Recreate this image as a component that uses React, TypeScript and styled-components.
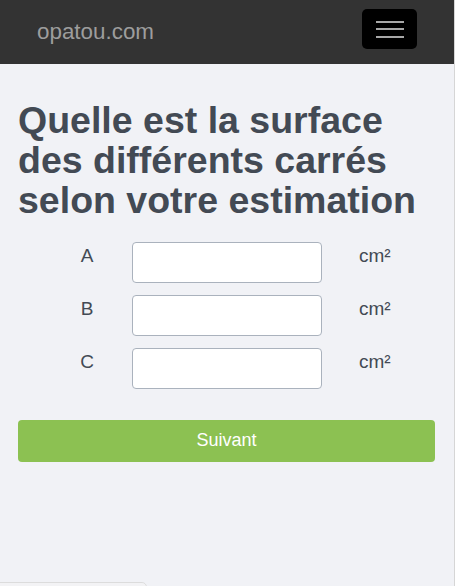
import React from "react";
import styled, { createGlobalStyle } from "styled-components";

const colors = {
  dark: "#333333",
  text: "#434a54",
  page: "#f1f2f6",
  border: "#aab2bd",
  green: "#8cc152",
  brand: "#9d9d9d",
};

const GlobalStyle = createGlobalStyle`
  html, body {
    margin: 0;
    padding: 0;
    background: #ffffff;
  }
  body {
    font-family: "Liberation Sans", Arial, sans-serif;
    color: ${colors.text};
  }
  * {
    box-sizing: border-box;
  }
`;

const Page = styled.div`
  width: 455px;
  min-height: 586px;
  background: ${colors.page};
  border-right: 1px solid #d6d6d6;
`;

const Navbar = styled.nav`
  height: 64px;
  background: ${colors.dark};
  display: flex;
  align-items: center;
  justify-content: space-between;
  padding: 0 37px 0 37px;
`;

const Brand = styled.a`
  font-size: 22.4px;
  color: ${colors.brand};
  text-decoration: none;
  margin-top: -1px;
`;

const Toggle = styled.button`
  width: 55px;
  height: 40px;
  margin-top: -6px;
  background: #000000;
  border: none;
  border-radius: 5px;
  display: flex;
  flex-direction: column;
  align-items: center;
  justify-content: center;
  gap: 5.5px;
  padding: 0;
`;

const Bar = styled.span`
  display: block;
  width: 28px;
  height: 2px;
  background: #a8a8a8;
`;

const Main = styled.main`
  padding: 36px 19px 0 18px;
`;

const Title = styled.h1`
  margin: 0 0 22px;
  font-size: 37.5px;
  line-height: 40px;
  font-weight: bold;
  color: ${colors.text};
`;

const Form = styled.form`
  display: flex;
  flex-direction: column;
  gap: 12px;
`;

const Row = styled.div`
  display: grid;
  grid-template-columns: 114px 190px 1fr;
  align-items: start;
`;

const Label = styled.label`
  font-size: 19px;
  line-height: 22px;
  padding: 3px 0 0 24px;
  text-align: center;
`;

const Input = styled.input`
  height: 41px;
  width: 190px;
  border: 1px solid ${colors.border};
  border-radius: 4px;
  background: #ffffff;
  font-size: 18px;
  padding: 0 10px;
`;

const Unit = styled.span`
  font-size: 19px;
  line-height: 22px;
  padding: 3px 0 0 37px;
`;

const Submit = styled.button`
  margin-top: 19px;
  width: 417px;
  height: 42px;
  border: none;
  border-radius: 4px;
  background: ${colors.green};
  color: #ffffff;
  font-family: "Liberation Sans", Arial, sans-serif;
  font-size: 18px;
  padding: 0 0 2px;
`;

const CornerTab = styled.div`
  position: fixed;
  left: -1px;
  bottom: -10px;
  width: 148px;
  height: 14px;
  border: 1px solid #dcdcdc;
  border-top-right-radius: 5px;
  background: #f3f3f5;
`;

const fields = ["A", "B", "C"];

export default function App() {
  return (
    <Page>
      <GlobalStyle />
      <Navbar>
        <Brand href="#">opatou.com</Brand>
        <Toggle type="button" aria-label="menu">
          <Bar />
          <Bar />
          <Bar />
        </Toggle>
      </Navbar>
      <Main>
        <Title>Quelle est la surface des différents carrés selon votre estimation</Title>
        <Form onSubmit={(e) => e.preventDefault()}>
          {fields.map((f) => (
            <Row key={f}>
              <Label htmlFor={`field-${f}`}>{f}</Label>
              <Input id={`field-${f}`} type="text" />
              <Unit>cm²</Unit>
            </Row>
          ))}
          <Submit type="submit">Suivant</Submit>
        </Form>
      </Main>
      <CornerTab />
    </Page>
  );
}
